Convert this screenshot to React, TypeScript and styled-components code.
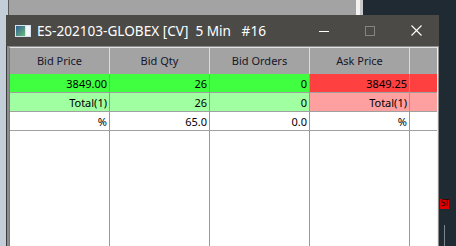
import React from "react";
import styled, { createGlobalStyle } from "styled-components";

const GlobalStyle = createGlobalStyle`
  html, body {
    margin: 0;
    padding: 0;
    background: #1f2a33;
  }
`;

const Desktop = styled.div`
  position: relative;
  width: 456px;
  height: 246px;
  overflow: hidden;
  background: #1f2a33;
  font-family: "Noto Sans", "Open Sans", sans-serif;
`;

// window sitting behind the chart window
const BackWindow = styled.div`
  position: absolute;
  left: 0;
  top: 0;
  width: 348px;
  height: 246px;
  background: #a3a3a3;
  border-left: 8px solid #c4ced8;
  border-right: 7px solid #f2f2f2;
  box-shadow: inset 1px 0 0 #5a5a5a;

  &::after {
    content: "";
    position: absolute;
    right: -7px;
    top: 0;
    width: 3px;
    height: 100%;
    background: #c9c9c9;
  }
`;

const Window = styled.div`
  position: absolute;
  left: 6px;
  top: 15px;
  width: 433px;
  height: 240px;
  display: flex;
  flex-direction: column;
`;

const TitleBar = styled.div`
  height: 31px;
  display: flex;
  align-items: center;
  background: #4b4a47;
  color: #ffffff;
`;

const AppIcon = styled.svg`
  margin-left: 9px;
  margin-right: 6px;
  flex-shrink: 0;
`;

const Title = styled.div`
  flex: 1;
  font-size: 13.6px;
  white-space: pre;
  padding-bottom: 1px;
`;

const CaptionButton = styled.div`
  width: 46px;
  height: 31px;
  display: flex;
  align-items: center;
  justify-content: center;
`;

const Frame = styled.div`
  flex: 1;
  display: flex;
  background: #8d8d8d;
  border-left: 1px solid #3c3c3c;
  padding: 1px 1px 0 2px;
  min-height: 0;
`;

const Grid = styled.div`
  flex: 1;
  display: flex;
  flex-direction: column;
  background: #ffffff;
  border-left: 1px solid #7a7a7a;
  border-top: 1px solid #e2e2e2;
  border-right: 1px solid #eeeeee;
  overflow: hidden;
`;

const HeaderRow = styled.div`
  height: 26px;
  display: flex;
  background: #a3a3a3;
  flex-shrink: 0;
`;

const HeaderCell = styled.div<{ $last?: boolean }>`
  box-sizing: border-box;
  width: ${(p) => (p.$last ? "auto" : "100px")};
  flex: ${(p) => (p.$last ? "1" : "none")};
  border-right: ${(p) => (p.$last ? "none" : "1px solid #dcdcdc")};
  display: flex;
  align-items: center;
  justify-content: center;
  font-size: 11px;
  color: #16162a;
  padding-bottom: 1px;
`;

const Row = styled.div<{ $filler?: boolean }>`
  box-sizing: border-box;
  height: ${(p) => (p.$filler ? "auto" : "19px")};
  flex: ${(p) => (p.$filler ? "1" : "none")};
  display: flex;
  border-bottom: ${(p) => (p.$filler ? "none" : "1px solid #a0a0a0")};
`;

const Cell = styled.div<{ $bg?: string; $last?: boolean }>`
  box-sizing: border-box;
  width: ${(p) => (p.$last ? "auto" : "100px")};
  flex: ${(p) => (p.$last ? "1" : "none")};
  border-right: ${(p) => (p.$last ? "none" : "1px solid #999999")};
  background: ${(p) => p.$bg || "#ffffff"};
  display: flex;
  align-items: center;
  justify-content: flex-end;
  padding-right: 2px;
  font-size: 11px;
  color: #000000;
`;

const Badge = styled.div`
  position: absolute;
  left: 440px;
  top: 199px;
  width: 9px;
  height: 10px;
  background: #e00000;
  color: #2a0000;
  font-family: "DejaVu Sans", sans-serif;
  font-size: 8px;
  line-height: 10px;
  text-align: center;
  letter-spacing: -1px;
  overflow: hidden;
`;

const Tick = styled.div`
  position: absolute;
  left: 444px;
  top: 225px;
  width: 1px;
  height: 21px;
  background: #7c848c;
`;

const GREEN = "#40ff40";
const LIGHT_GREEN = "#a0ffa0";
const RED = "#ff4040";
const PINK = "#ffa0a0";

const columns = ["Bid Price", "Bid Qty", "Bid Orders", "Ask Price"];

const rows: { text: string; bg?: string }[][] = [
  [
    { text: "3849.00", bg: GREEN },
    { text: "26", bg: GREEN },
    { text: "0", bg: GREEN },
    { text: "3849.25", bg: RED },
    { text: "", bg: RED },
  ],
  [
    { text: "Total(1)", bg: LIGHT_GREEN },
    { text: "26", bg: LIGHT_GREEN },
    { text: "0", bg: LIGHT_GREEN },
    { text: "Total(1)", bg: PINK },
    { text: "", bg: PINK },
  ],
  [{ text: "%" }, { text: "65.0" }, { text: "0.0" }, { text: "%" }, { text: "" }],
];

const App = () => {
  return (
    <>
      <GlobalStyle />
      <Desktop>
        <BackWindow />
        <Window>
          <TitleBar>
            <AppIcon width="16" height="12" viewBox="0 0 16 12">
              <defs>
                <linearGradient id="ico" x1="0" y1="0" x2="1" y2="1">
                  <stop offset="0" stopColor="#2f5f96" />
                  <stop offset="1" stopColor="#6dbb78" />
                </linearGradient>
              </defs>
              <rect x="0" y="0" width="16" height="12" fill="#d6e2ee" />
              <rect x="1" y="1" width="9" height="10" fill="url(#ico)" />
              <rect x="11" y="1" width="4" height="10" fill="#f4f8fc" />
            </AppIcon>
            <Title>{"ES-202103-GLOBEX [CV]  5 Min   #16"}</Title>
            <CaptionButton>
              <svg width="10" height="10" viewBox="0 0 10 10">
                <rect x="0" y="5" width="10" height="1" fill="#ffffff" />
              </svg>
            </CaptionButton>
            <CaptionButton>
              <svg width="10" height="10" viewBox="0 0 10 10">
                <rect x="0.5" y="0.5" width="9" height="9" fill="none" stroke="#858585" />
              </svg>
            </CaptionButton>
            <CaptionButton>
              <svg width="11" height="11" viewBox="0 0 11 11">
                <path d="M0.5 0.5 L10.5 10.5 M10.5 0.5 L0.5 10.5" stroke="#ffffff" strokeWidth="1.1" />
              </svg>
            </CaptionButton>
          </TitleBar>
          <Frame>
            <Grid>
              <HeaderRow>
                {columns.map((c) => (
                  <HeaderCell key={c}>{c}</HeaderCell>
                ))}
                <HeaderCell $last />
              </HeaderRow>
              {rows.map((r, i) => (
                <Row key={i}>
                  {r.map((c, j) => (
                    <Cell key={j} $bg={c.bg} $last={j === r.length - 1}>
                      {c.text}
                    </Cell>
                  ))}
                </Row>
              ))}
              <Row $filler>
                {[0, 1, 2, 3].map((k) => (
                  <Cell key={k} />
                ))}
                <Cell $last />
              </Row>
            </Grid>
          </Frame>
        </Window>
        <Badge>ST</Badge>
        <Tick />
      </Desktop>
    </>
  );
};

export default App;
